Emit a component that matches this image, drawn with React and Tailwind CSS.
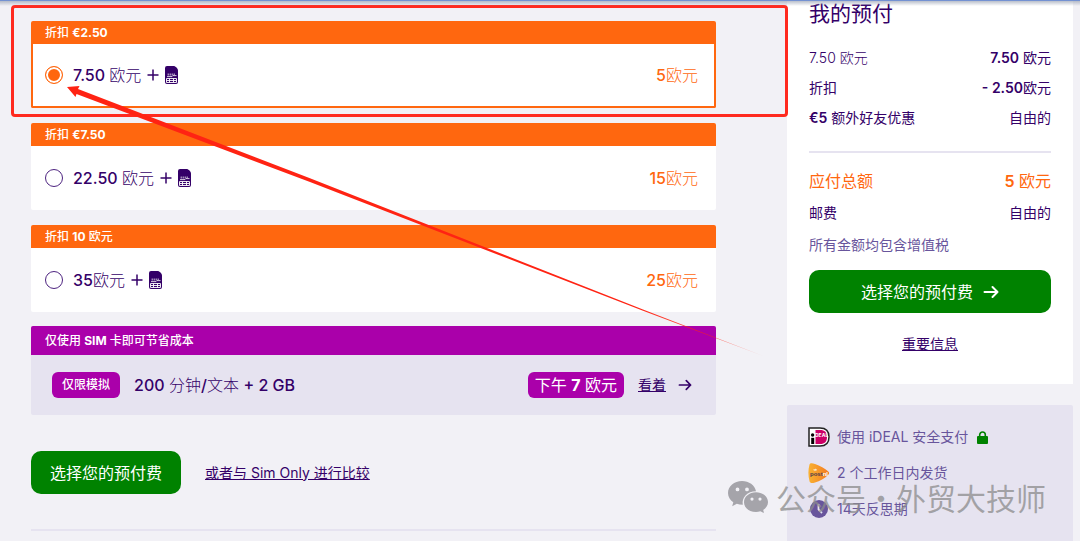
import React from "react";

const offers = [
  { id: "p750", banner: <>折扣 <b className="font-bold">€2.50</b></>, amount: "7.50 ", price: "5" },
  { id: "p2250", banner: <>折扣 <b className="font-bold">€7.50</b></>, amount: "22.50 ", price: "15" },
  { id: "p35", banner: <>折扣 <b className="font-bold">10</b> 欧元</>, amount: "35", price: "25" },
];

function SimIcon() {
  return (
    <svg className="h-[18px] w-[13px] shrink-0" viewBox="0 0 13 18" aria-hidden="true">
      <path d="M2 0H8.500C10.500 0 13 2.500 13 4.500V16A2 2 0 0 1 11 18H2A2 2 0 0 1 0 16V2A2 2 0 0 1 2 0Z" fill="#340068" />
      <path d="M3.200 7.500V9.500M5.200 7.500V9.500M7.200 7.500V9.500M9.200 7.500V9M2 10.600H7L8 9.600H11.500" fill="none" stroke="#fff" strokeWidth="0.800" />
      <path d="M1.500 12.500H11.500V16.500H1.500ZM1.500 14.500H11.500M4.500 12.500V16.500M8.500 12.500V16.500" fill="none" stroke="#fff" strokeWidth="0.900" />
    </svg>
  );
}

function PlusIcon() {
  return (
    <svg className="size-3 shrink-0" viewBox="0 0 12 12" fill="none" stroke="#340068" strokeWidth="1.5" aria-hidden="true">
      <path d="M6 0.500V11.500M0.500 6H11.500" />
    </svg>
  );
}

function ArrowIcon({ className }) {
  return (
    <svg className={className} viewBox="0 0 16 14" fill="none" stroke="currentColor" strokeWidth="2" strokeLinecap="round" strokeLinejoin="round" aria-hidden="true">
      <path d="M1.500 7H14.500M9.500 2L14.500 7L9.500 12" />
    </svg>
  );
}

function Offer({ offer, selected, onSelect }) {
  return (
    <div className="overflow-hidden rounded-xs bg-white">
      <div className="h-[23px] bg-[#ff670f] px-3.5 text-xs leading-[23px] font-medium text-white">{offer.banner}</div>
      <label
        htmlFor={offer.id}
        className={
          selected
            ? "flex h-16 cursor-pointer items-center border-2 border-t-0 border-[#ff670f] pr-4 pl-3"
            : "flex h-16 cursor-pointer items-center pr-[18px] pl-3.5"
        }
      >
        <input
          id={offer.id}
          type="radio"
          name="prepaid"
          checked={selected}
          onChange={onSelect}
          className="size-[18px] shrink-0 appearance-none rounded-full border border-[#4d2380] bg-white checked:border-[#ff670f] checked:bg-[#ff670f] checked:shadow-[inset_0_0_0_2px_white]"
        />
        <span className="ml-2.5 text-base leading-6 whitespace-pre">
          <span className="font-medium">{offer.amount}</span>欧元
        </span>
        <span className="ml-1.5 flex items-center gap-1.5">
          <PlusIcon />
          <SimIcon />
        </span>
        <span className="ml-auto text-base leading-6 text-[#ff670f]">
          <span className="font-medium">{offer.price}</span>欧元
        </span>
      </label>
    </div>
  );
}

function IdealLogo() {
  return (
    <svg className="h-5 w-[22px] shrink-0" viewBox="0 0 22 20" aria-hidden="true">
      <path d="M1 1H12C18 1 21 4.500 21 10S18 19 12 19H1Z" fill="#fff" stroke="#222" strokeWidth="1.500" />
      <path d="M7.500 3H12C16.800 3 19 5.500 19 10S16.800 17 12 17H7.500Z" fill="#cc0066" />
      <circle cx="4.600" cy="8" r="1.700" fill="#000" />
      <path d="M3.200 10.800H6.200V17H3.200Z" fill="#000" />
      <text x="7" y="10.200" fontSize="5" fontWeight="700" fontFamily="Inter, sans-serif" fill="#fff">DEAL</text>
    </svg>
  );
}

function PostLogo() {
  return (
    <svg className="h-5 w-[22px] shrink-0" viewBox="0 0 22 20" aria-hidden="true">
      <defs>
        <linearGradient id="post" x1="0" y1="0" x2="1" y2="0">
          <stop offset="0" stopColor="#f9b233" />
          <stop offset="1" stopColor="#f47a20" />
        </linearGradient>
      </defs>
      <path d="M1.500 1.500C2 0 4 0 7 1C12 2.500 17 5.500 20 8.200C21.500 9.500 21.500 10.700 20 12C16.500 15.500 12 18 7 19.400C4 20.300 2.200 20.200 1.600 18.500C0 13 0 7 1.500 1.500Z" fill="url(#post)" />
      <path d="M5.500 6L5.800 7.500H8.500L8.800 6L7.800 6.800L7.200 5.500L6.500 6.800Z" fill="#fff" />
      <text x="2" y="12.500" fontSize="6" fontWeight="700" fontFamily="Liberation Sans, sans-serif" fill="#4a3a4d">post<tspan fill="#fff">nl</tspan></text>
    </svg>
  );
}

function ClockIcon() {
  return (
    <svg className="h-5 w-[22px] shrink-0" viewBox="0 0 22 20" aria-hidden="true">
      <circle cx="11" cy="10" r="9" fill="#68559c" />
      <path d="M10.500 5V10.500L14 14" fill="none" stroke="#e6e3f0" strokeWidth="1.800" />
    </svg>
  );
}

function LockIcon() {
  return (
    <svg className="ml-0.5 h-[13px] w-[11px] shrink-0" viewBox="0 0 11 13" aria-hidden="true">
      <rect x="0" y="5" width="11" height="8" rx="1" fill="#008200" />
      <path d="M2.700 6V3.800A2.800 2.800 0 0 1 8.300 3.800V6" fill="none" stroke="#008200" strokeWidth="1.600" />
    </svg>
  );
}

function Row({ label, children }) {
  return (
    <div className="flex justify-between">
      <dt>{label}</dt>
      <dd>{children}</dd>
    </div>
  );
}

export default function App() {
  const [selected, setSelected] = React.useState("p750");
  return (
    <div className="relative flex min-h-screen items-stretch gap-[71px] overflow-hidden bg-[#f2f1f6] pr-[7px] pl-[31px] font-['Inter','Noto_Sans_CJK_SC',sans-serif] text-[#340068]">
      <main className="min-w-0 flex-1 pt-[21px] font-light">
        <div className="relative">
          <form className="flex flex-col gap-[15px]">
            {offers.map((offer) => (
              <Offer key={offer.id} offer={offer} selected={selected === offer.id} onSelect={() => setSelected(offer.id)} />
            ))}
          </form>
          <div className="pointer-events-none absolute -top-4 -right-[72px] -left-5 h-28 rounded-sm border-[3px] border-[#ff2a1f]" />
          <svg className="pointer-events-none absolute top-[64px] left-9 z-10 h-[278px] w-[710px]" viewBox="0 0 710 278" aria-hidden="true">
            <defs>
              <linearGradient id="tail" gradientUnits="userSpaceOnUse" x1="0" y1="0" x2="708" y2="276">
                <stop offset="0.800" stopColor="#ff2313" />
                <stop offset="0.920" stopColor="#ff2313" stopOpacity="0.700" />
                <stop offset="1" stopColor="#ff2313" stopOpacity="0.150" />
              </linearGradient>
            </defs>
            <path d="M0 2L12.500 1L11 4L243 93.300L576 224.400L708 275.500L576 225.800L243 97L9.500 9L8.500 12Z" fill="url(#tail)" />
          </svg>
        </div>

        <section className="mt-3.5 overflow-hidden rounded-xs bg-[#e6e3f0]">
          <h2 className="h-[29px] bg-[#aa00aa] px-3.5 text-xs leading-[29px] font-medium text-white">
            仅使用 <b className="font-bold">SIM</b> 卡即可节省成本
          </h2>
          <div className="flex h-[60px] items-center pr-6 pl-[21px]">
            <span className="h-[26px] rounded-md bg-[#aa00aa] px-2.5 text-xs leading-[26px] font-medium text-white">仅限模拟</span>
            <span className="ml-3.5 text-base leading-6">
              <span className="font-medium">200</span> 分钟<span className="font-medium">/</span>文本 <span className="font-medium">+ 2 GB</span>
            </span>
            <span className="ml-auto h-[26px] rounded-md bg-[#aa00aa] px-[7px] text-base leading-[26px] font-normal text-white">
              下午 <b className="font-bold">7</b> 欧元
            </span>
            <a href="#sim-only" className="ml-3.5 flex items-center gap-3 text-sm leading-6 font-normal">
              <span className="underline">看着</span>
              <ArrowIcon className="h-3 w-3.5" />
            </a>
          </div>
        </section>

        <div className="mt-9 flex items-center gap-6">
          <button type="button" className="h-[43px] rounded-[10px] bg-[#008200] px-[19px] text-base leading-6 font-normal text-white">选择您的预付费</button>
          <a href="#compare" className="text-sm leading-6 font-normal underline">或者与 Sim Only 进行比较</a>
        </div>
        <hr className="mt-[35px] border-t-2 border-[#e6e3f0]" />
      </main>

      <aside className="flex w-[286px] shrink-0 flex-col">
        <section className="bg-white px-[22px] pb-7">
          <h2 className="text-[21px] leading-7">我的预付</h2>
          <dl className="mt-[18px] flex flex-col gap-1.5 text-sm leading-6">
            <Row label={<span className="font-light">7.50 欧元</span>}><span className="font-semibold">7.50</span> 欧元</Row>
            <Row label="折扣"><span className="font-semibold">- 2.50</span>欧元</Row>
            <Row label={<><span className="font-semibold">€5</span> 额外好友优惠</>}>自由的</Row>
          </dl>
          <hr className="mt-[21px] border-t-2 border-[#e6e3f0]" />
          <dl className="mt-4 text-sm leading-6">
            <div className="flex justify-between text-base leading-6 text-[#ff670f]">
              <dt>应付总额</dt>
              <dd><span className="font-semibold">5</span> 欧元</dd>
            </div>
            <div className="mt-2">
              <Row label="邮费">自由的</Row>
            </div>
          </dl>
          <p className="mt-2 text-sm leading-6 text-[#68559c]">所有金额均包含增值税</p>
          <button type="button" className="mt-[13px] flex h-[43px] w-full items-center justify-center gap-2.5 rounded-[10px] bg-[#008200] text-base leading-6 text-white">
            选择您的预付费
            <ArrowIcon className="h-3.5 w-4" />
          </button>
          <div className="mt-[18px] text-center">
            <a href="#info" className="text-sm leading-6 underline">重要信息</a>
          </div>
        </section>

        <section className="mt-[21px] flex-1 rounded-t-xs bg-[#e6e3f0] px-[21px] pt-5">
          <ul className="flex flex-col gap-3 text-sm leading-6 text-[#68559c]">
            <li className="flex items-center gap-[7px]"><IdealLogo />使用 iDEAL 安全支付 <LockIcon /></li>
            <li className="flex items-center gap-[7px]"><PostLogo />2 个工作日内发货</li>
            <li className="flex items-center gap-[7px]"><ClockIcon />14天反思期</li>
          </ul>
        </section>
      </aside>

      <div className="pointer-events-none absolute inset-x-0 top-0 h-1.5 border-t border-[#7391d2] bg-linear-to-b from-[#9ba3b4]/70 to-transparent" />

      <div className="pointer-events-none absolute right-[34px] bottom-[26px] flex items-center gap-2 text-[#8c8c8c]/75">
        <svg className="h-8 w-10" viewBox="0 0 40 32" aria-hidden="true">
          <path fillRule="evenodd" fill="#a5a4aa" d="M14 0C6.200 0 0 5.200 0 12C0 15.800 2.100 19.200 5.300 21.300L4.200 25.200L8.800 22.800C10.500 23.500 12.500 23.800 14.800 23.800C13.500 16.200 19.500 10.200 28 10.200C26.800 4.200 21 0 14 0ZM9.500 6.500A1.900 1.900 0 1 1 9.500 10.300A1.900 1.900 0 1 1 9.500 6.500ZM19 6.500A1.900 1.900 0 1 1 19 10.300A1.900 1.900 0 1 1 19 6.500Z" />
          <path fillRule="evenodd" fill="#a5a4aa" d="M28 11.200C21.300 11.200 16 15.600 16 21.200S21.300 31 28 31C29.500 31 31 30.800 32.300 30.300L36 32L35.200 28.900C38 27.100 40 24.400 40 21.200C40 15.600 34.700 11.200 28 11.200ZM24 16.500A1.600 1.600 0 1 1 24 19.700A1.600 1.600 0 1 1 24 16.500ZM32 16.500A1.600 1.600 0 1 1 32 19.700A1.600 1.600 0 1 1 32 16.500Z" />
        </svg>
        <p className="flex font-['Noto_Sans_CJK_SC',sans-serif] text-[30px] leading-9">
          <span>公众号</span>
          <span className="w-[30px] text-center">·</span>
          <span>外贸大技师</span>
        </p>
      </div>
    </div>
  );
}
